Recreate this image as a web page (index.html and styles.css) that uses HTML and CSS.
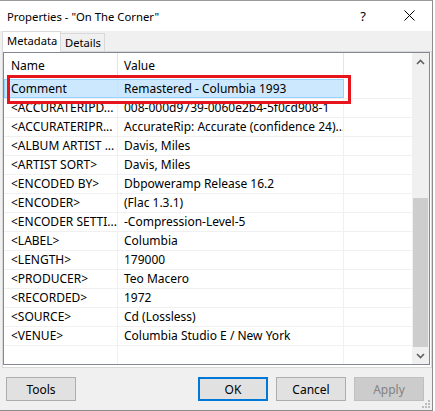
FILE: index.html
```html
<!DOCTYPE html>
<html lang="en">
<head>
<meta charset="utf-8">
<title>Properties</title>
<link rel="stylesheet" href="styles.css">
</head>
<body>
<div class="window">
  <div class="titlebar">
    <span class="title">Properties - "On The Corner"</span>
    <span class="help">?</span>
    <span class="close">
      <svg width="11" height="11" viewBox="0 0 11 11"><path d="M0.5 0.5 L10.5 10.5 M10.5 0.5 L0.5 10.5" stroke="#000" stroke-width="1" fill="none"/></svg>
    </span>
  </div>

  <div class="tabs">
    <div class="tab active">Metadata</div>
    <div class="tab">Details</div>
  </div>

  <div class="page">
    <div class="list">
      <div class="cols">
        <div class="row head">
          <div class="cell name">Name</div>
          <div class="cell value">Value</div>
          <div class="cell extra"></div>
        </div>
        <div class="row sel">
          <div class="cell name">Comment</div>
          <div class="cell value">Remastered - Columbia 1993</div>
          <div class="cell extra"></div>
        </div>
        <div class="row">
          <div class="cell name">&lt;ACCURATERIPD...</div>
          <div class="cell value">008-000d9739-0060e2b4-5f0cd908-1</div>
          <div class="cell extra"></div>
        </div>
        <div class="row">
          <div class="cell name">&lt;ACCURATERIPR...</div>
          <div class="cell value">AccurateRip: Accurate (confidence 24)...</div>
          <div class="cell extra"></div>
        </div>
        <div class="row">
          <div class="cell name">&lt;ALBUM ARTIST ...</div>
          <div class="cell value">Davis, Miles</div>
          <div class="cell extra"></div>
        </div>
        <div class="row">
          <div class="cell name">&lt;ARTIST SORT&gt;</div>
          <div class="cell value">Davis, Miles</div>
          <div class="cell extra"></div>
        </div>
        <div class="row">
          <div class="cell name">&lt;ENCODED BY&gt;</div>
          <div class="cell value">Dbpoweramp Release 16.2</div>
          <div class="cell extra"></div>
        </div>
        <div class="row">
          <div class="cell name">&lt;ENCODER&gt;</div>
          <div class="cell value">(Flac 1.3.1)</div>
          <div class="cell extra"></div>
        </div>
        <div class="row">
          <div class="cell name">&lt;ENCODER SETTI...</div>
          <div class="cell value">-Compression-Level-5</div>
          <div class="cell extra"></div>
        </div>
        <div class="row">
          <div class="cell name">&lt;LABEL&gt;</div>
          <div class="cell value">Columbia</div>
          <div class="cell extra"></div>
        </div>
        <div class="row">
          <div class="cell name">&lt;LENGTH&gt;</div>
          <div class="cell value">179000</div>
          <div class="cell extra"></div>
        </div>
        <div class="row">
          <div class="cell name">&lt;PRODUCER&gt;</div>
          <div class="cell value">Teo Macero</div>
          <div class="cell extra"></div>
        </div>
        <div class="row">
          <div class="cell name">&lt;RECORDED&gt;</div>
          <div class="cell value">1972</div>
          <div class="cell extra"></div>
        </div>
        <div class="row">
          <div class="cell name">&lt;SOURCE&gt;</div>
          <div class="cell value">Cd (Lossless)</div>
          <div class="cell extra"></div>
        </div>
        <div class="row">
          <div class="cell name">&lt;VENUE&gt;</div>
          <div class="cell value">Columbia Studio E / New York</div>
          <div class="cell extra"></div>
        </div>
        <div class="row filler">
          <div class="cell name"></div>
          <div class="cell value"></div>
          <div class="cell extra"></div>
        </div>
      </div>
      <div class="scrollbar">
        <div class="arrow">
          <svg width="9" height="6" viewBox="0 0 9 6"><polyline points="1,5 4.5,1.5 8,5" fill="none" stroke="#606060" stroke-width="1.6"/></svg>
        </div>
        <div class="track"><div class="thumb"></div></div>
        <div class="arrow">
          <svg width="9" height="6" viewBox="0 0 9 6"><polyline points="1,1 4.5,4.5 8,1" fill="none" stroke="#606060" stroke-width="1.6"/></svg>
        </div>
      </div>
      <div class="mark"></div>
    </div>
  </div>

  <div class="footer">
    <button class="btn">Tools</button>
    <div class="spacer"></div>
    <button class="btn default">OK</button>
    <button class="btn">Cancel</button>
    <button class="btn" disabled>Apply</button>
    <svg class="grip" width="9" height="9" viewBox="0 0 9 9">
      <rect x="6" y="0" width="2" height="2" fill="#bcbcbc"/>
      <rect x="3" y="3" width="2" height="2" fill="#bcbcbc"/>
      <rect x="6" y="3" width="2" height="2" fill="#bcbcbc"/>
      <rect x="0" y="6" width="2" height="2" fill="#bcbcbc"/>
      <rect x="3" y="6" width="2" height="2" fill="#bcbcbc"/>
      <rect x="6" y="6" width="2" height="2" fill="#bcbcbc"/>
    </svg>
  </div>
</div>
</body>
</html>
```

FILE: styles.css
```css
* { box-sizing: border-box; }

html, body {
  margin: 0;
  padding: 0;
  background: #ffffff;
}

body {
  font-family: "Noto Sans", "Open Sans", sans-serif;
  font-size: 12px;
  color: #000;
}

.window {
  width: 433px;
  height: 411px;
  border-top: 1px solid #9a9a9a;
  border-right: 1px solid #8c8c8c;
  border-bottom: 1px solid #8c8c8c;
  background: #f0f0f0;
  display: flex;
  flex-direction: column;
}

/* caption */
.titlebar {
  height: 30px;
  flex: none;
  background: #fff;
  display: flex;
  align-items: center;
  padding-left: 7px;
}
.title {
  font-size: 11.3px;
  flex: 1;
}
.help {
  font-size: 13px;
  margin-right: 38px;
  margin-top: -1px;
}
.close {
  width: 11px;
  height: 11px;
  margin-right: 17px;
  margin-top: -2px;
  display: flex;
}

/* tab strip */
.tabs {
  height: 20px;
  flex: none;
  display: flex;
  align-items: flex-start;
  padding-left: 2px;
  font-size: 11.2px;
}
.tab {
  border: 1px solid #d9d9d9;
  border-bottom: none;
  background: #f0f0f0;
  margin-top: 2px;
  height: 18px;
  line-height: 18px;
  padding: 0 3px 0 4px;
  margin-left: -1px;
  white-space: nowrap;
}
.tab.active {
  margin-left: 0;
  margin-top: 0;
  height: 21px;
  line-height: 18px;
  background: #fff;
  width: 59px;
  padding-left: 4px;
  position: relative;
  z-index: 1;
}

/* tab page */
.page {
  height: 317px;
  flex: none;
  margin-left: 2px;
  border: 1px solid #d9d9d9;
  background: #fff;
  padding: 0 1px 2px 0;
}

.list {
  position: relative;
  height: 313px;
  border: 1px solid #828790;
  display: flex;
  background: #fff;
}

.cols {
  flex: 1;
  display: flex;
  flex-direction: column;
}

.row {
  display: grid;
  grid-template-columns: 114px 226px 68px;
  height: 19px;
  border-top: 1px solid #f0f0f0;
  line-height: 18px;
}
.cell {
  white-space: nowrap;
  overflow: hidden;
  border-right: 1px solid #f0f0f0;
}
.cell.extra { border-right: none; }
.cell.name { padding-left: 7px; }
.cell.value { padding-left: 6px; }

.row.head {
  height: 26px;
  border-top: none;
  line-height: 26px;
}
.row.head .cell { border-right-color: #e5e5e5; }
.row.head .cell.extra { border-right: none; }

.row.sel { border-top-color: transparent; }
.row.sel .cell.name,
.row.sel .cell.value {
  background: #cce8ff;
  border-top: 1px solid #99d1ff;
  border-bottom: 1px solid #99d1ff;
  margin-top: -1px;
  height: 19px;
  line-height: 17px;
}
.row.sel .cell.name {
  border-left: 1px solid #99d1ff;
  padding-left: 6px;
  border-right-color: #c4e3fb;
}
.row.sel .cell.value { border-right-color: #99d1ff; }

.row.filler { flex: 1; }

/* annotation frame around the selected entry */
.mark {
  position: absolute;
  left: 3px;
  top: 22px;
  width: 344px;
  height: 29px;
  border: 3px solid #e8141c;
  pointer-events: none;
}

/* vertical scrollbar */
.scrollbar {
  width: 17px;
  flex: none;
  background: #f0f0f0;
  display: flex;
  flex-direction: column;
}
.arrow {
  height: 17px;
  flex: none;
  display: flex;
  align-items: center;
  justify-content: center;
}
.track {
  flex: 1;
  display: flex;
  flex-direction: column;
  padding: 0 1px;
}
.thumb {
  margin-top: auto;
  height: 149px;
  background: #cdcdcd;
}

/* button row */
.footer {
  flex: 1;
  position: relative;
  display: flex;
  align-items: flex-start;
  padding: 9px 8px 0 6px;
  gap: 8px;
}
.spacer { flex: 1; }
.btn {
  width: 70px;
  height: 24px;
  font-family: inherit;
  font-size: 12px;
  color: #000;
  background: #e1e1e1;
  border: 1px solid #adadad;
  padding: 0;
  margin: 0;
}
.btn.default {
  border: 2px solid #0078d7;
}
.btn:disabled {
  background: #cccccc;
  border-color: #bfbfbf;
  color: #838383;
}
.grip {
  position: absolute;
  right: 1px;
  bottom: 1px;
}
```
